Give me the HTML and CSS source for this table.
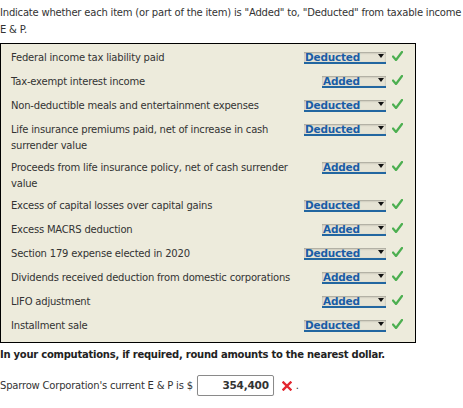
FILE: index.html
```html
<!DOCTYPE html>
<html>
<head>
<meta charset="utf-8">
<link rel="stylesheet" href="styles.css">
</head>
<body>
<div class="page">
  <div class="intro">
    <div class="intro-line">Indicate whether each item (or part of the item) is "Added" to, "Deducted" from taxable income</div>
    <div class="intro-line">E &amp; P.</div>
  </div>
  <div class="box">
    <div class="row"><div class="label">Federal income tax liability paid</div><div class="sel ded"><span>Deducted</span><i class="arr"></i></div><div class="chk"><svg width="11" height="10" viewBox="0 0 11 10"><path d="M1 5.5 L4 9 L10 1" fill="none" stroke="#4caf50" stroke-width="2.2" stroke-linecap="round" stroke-linejoin="round"/></svg></div></div>
    <div class="row"><div class="label">Tax-exempt interest income</div><div class="sel add"><span>Added</span><i class="arr"></i></div><div class="chk"><svg width="11" height="10" viewBox="0 0 11 10"><path d="M1 5.5 L4 9 L10 1" fill="none" stroke="#4caf50" stroke-width="2.2" stroke-linecap="round" stroke-linejoin="round"/></svg></div></div>
    <div class="row"><div class="label">Non-deductible meals and entertainment expenses</div><div class="sel ded"><span>Deducted</span><i class="arr"></i></div><div class="chk"><svg width="11" height="10" viewBox="0 0 11 10"><path d="M1 5.5 L4 9 L10 1" fill="none" stroke="#4caf50" stroke-width="2.2" stroke-linecap="round" stroke-linejoin="round"/></svg></div></div>
    <div class="row"><div class="label">Life insurance premiums paid, net of increase in cash<br>surrender value</div><div class="sel ded"><span>Deducted</span><i class="arr"></i></div><div class="chk"><svg width="11" height="10" viewBox="0 0 11 10"><path d="M1 5.5 L4 9 L10 1" fill="none" stroke="#4caf50" stroke-width="2.2" stroke-linecap="round" stroke-linejoin="round"/></svg></div></div>
    <div class="row"><div class="label">Proceeds from life insurance policy, net of cash surrender<br>value</div><div class="sel add"><span>Added</span><i class="arr"></i></div><div class="chk"><svg width="11" height="10" viewBox="0 0 11 10"><path d="M1 5.5 L4 9 L10 1" fill="none" stroke="#4caf50" stroke-width="2.2" stroke-linecap="round" stroke-linejoin="round"/></svg></div></div>
    <div class="row"><div class="label">Excess of capital losses over capital gains</div><div class="sel ded"><span>Deducted</span><i class="arr"></i></div><div class="chk"><svg width="11" height="10" viewBox="0 0 11 10"><path d="M1 5.5 L4 9 L10 1" fill="none" stroke="#4caf50" stroke-width="2.2" stroke-linecap="round" stroke-linejoin="round"/></svg></div></div>
    <div class="row"><div class="label">Excess MACRS deduction</div><div class="sel add"><span>Added</span><i class="arr"></i></div><div class="chk"><svg width="11" height="10" viewBox="0 0 11 10"><path d="M1 5.5 L4 9 L10 1" fill="none" stroke="#4caf50" stroke-width="2.2" stroke-linecap="round" stroke-linejoin="round"/></svg></div></div>
    <div class="row"><div class="label">Section 179 expense elected in 2020</div><div class="sel ded"><span>Deducted</span><i class="arr"></i></div><div class="chk"><svg width="11" height="10" viewBox="0 0 11 10"><path d="M1 5.5 L4 9 L10 1" fill="none" stroke="#4caf50" stroke-width="2.2" stroke-linecap="round" stroke-linejoin="round"/></svg></div></div>
    <div class="row"><div class="label">Dividends received deduction from domestic corporations</div><div class="sel add"><span>Added</span><i class="arr"></i></div><div class="chk"><svg width="11" height="10" viewBox="0 0 11 10"><path d="M1 5.5 L4 9 L10 1" fill="none" stroke="#4caf50" stroke-width="2.2" stroke-linecap="round" stroke-linejoin="round"/></svg></div></div>
    <div class="row"><div class="label">LIFO adjustment</div><div class="sel add"><span>Added</span><i class="arr"></i></div><div class="chk"><svg width="11" height="10" viewBox="0 0 11 10"><path d="M1 5.5 L4 9 L10 1" fill="none" stroke="#4caf50" stroke-width="2.2" stroke-linecap="round" stroke-linejoin="round"/></svg></div></div>
    <div class="row"><div class="label">Installment sale</div><div class="sel ded"><span>Deducted</span><i class="arr"></i></div><div class="chk"><svg width="11" height="10" viewBox="0 0 11 10"><path d="M1 5.5 L4 9 L10 1" fill="none" stroke="#4caf50" stroke-width="2.2" stroke-linecap="round" stroke-linejoin="round"/></svg></div></div>
  </div>
  <div class="note">In your computations, if required, round amounts to the nearest dollar.</div>
  <div class="answer">
    <span>Sparrow Corporation's current E &amp; P is $</span>
    <span class="input">354,400</span>
    <span class="wrong"><svg width="10" height="10" viewBox="0 0 10 10"><path d="M1.5 1.5 L8.5 8.5 M8.5 1.5 L1.5 8.5" fill="none" stroke="#e3262f" stroke-width="2.4" stroke-linecap="square"/></svg></span>
    <span class="dot">.</span>
  </div>
</div>
</body>
</html>
```

FILE: styles.css
```css
html, body {
  margin: 0;
  padding: 0;
  background: #ffffff;
}
body {
  font-family: "DejaVu Sans", Verdana, sans-serif;
  font-size: 10px;
  letter-spacing: -0.2px;
  color: #333333;
  overflow: hidden;
}
.page {
  width: 463px;
  overflow: hidden;
}
.intro {
  padding-top: 4px;
}
.intro-line {
  white-space: nowrap;
  line-height: 17px;
}
.box {
  margin-top: 5px;
  width: 416px;
  box-sizing: border-box;
  border: 1px solid #000000;
  background: #edebdc;
  padding: 2px 0 4px 0;
}
.row {
  display: flex;
  align-items: flex-start;
  padding: 4px 0 2px 10px;
  min-height: 18px;
}
.label {
  flex: 1;
  line-height: 16px;
  white-space: nowrap;
}
.sel {
  margin-top: 2px;
  height: 12px;
  border-bottom: 2px solid #2266a0;
  background: #e6e3d4;
  box-shadow: inset 0 1px 2px rgba(0, 0, 0, 0.3);
  display: flex;
  align-items: center;
  justify-content: space-between;
  font-weight: bold;
  font-size: 10.5px;
  letter-spacing: -0.2px;
  color: #1a5da6;
  line-height: 11px;
  padding-left: 1px;
  box-sizing: border-box;
}
.sel.ded { width: 82px; }
.sel.add { width: 64px; }
.arr {
  width: 0;
  height: 0;
  border-left: 3px solid transparent;
  border-right: 3px solid transparent;
  border-top: 4px solid #111111;
  margin-right: 2px;
  margin-top: -2px;
}
.chk {
  width: 29px;
  display: flex;
  justify-content: flex-start;
  padding-left: 6px;
  box-sizing: border-box;
  margin-top: 1px;
}
.note {
  margin-top: 4px;
  font-weight: bold;
  color: #222222;
  line-height: 16px;
  white-space: nowrap;
  letter-spacing: -0.25px;
}
.answer {
  margin-top: 12px;
  display: flex;
  align-items: center;
  white-space: nowrap;
}
.input {
  display: inline-block;
  width: 77px;
  height: 21px;
  margin-left: 4px;
  box-sizing: border-box;
  border: 1px solid #8a8a8a;
  border-radius: 2px;
  box-shadow: 0 1px 1px rgba(0, 0, 0, 0.15);
  text-align: right;
  font-weight: bold;
  font-size: 10.5px;
  line-height: 19px;
  padding-right: 4px;
  color: #333333;
}
.wrong {
  display: flex;
  margin-left: 8px;
}
.dot {
  margin-left: 4px;
}
```
